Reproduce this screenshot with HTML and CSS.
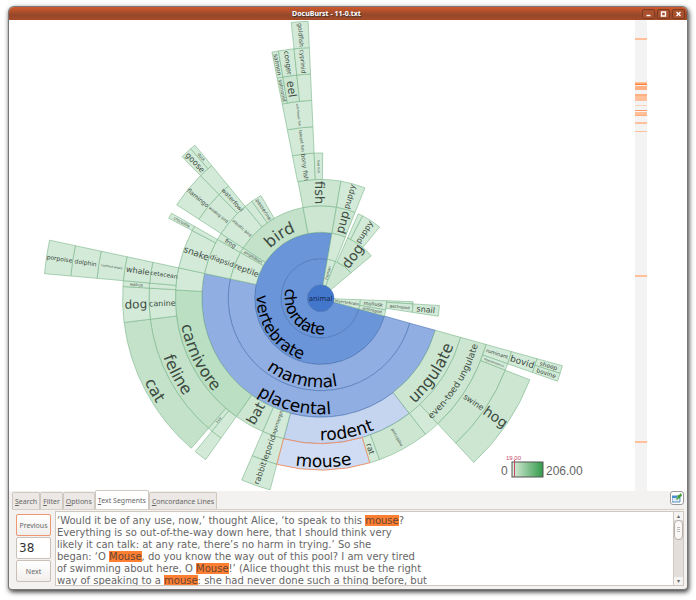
FILE: index.html
```html
<!DOCTYPE html>
<html lang="en">
<head>
    <meta charset="UTF-8">
    <meta name="viewport" content="width=device-width, initial-scale=1.0">
    <title>DocuBurst - 11-0.txt</title>
    <link rel="stylesheet" href="styles.css">
</head>
<body>
    <div class="window">
        <header class="titlebar">
            <h1 class="title">DocuBurst - 11-0.txt</h1>
            <div class="window-buttons">
                <button type="button" aria-label="Minimize"><svg viewBox="0 0 10 8"><path d="M3 5.5h4"/></svg></button>
                <button type="button" aria-label="Maximize"><svg viewBox="0 0 10 8"><path d="M3 2h4v4H3z"/></svg></button>
                <button type="button" aria-label="Close"><svg viewBox="0 0 10 8"><path d="M3 2l4 4M7 2L3 6"/></svg></button>
            </div>
        </header>

        <main>
            <svg class="chart" id="chart" viewBox="9 20 678 471" role="img" aria-label="Word tree for animal">
                <defs>
                    <linearGradient id="scale">
                        <stop offset="0" stop-color="#dceedd"/>
                        <stop offset="1" stop-color="#339a4a"/>
                    </linearGradient>
                </defs>
                <g id="cells"></g>
                <g id="labels"></g>
                <g id="overview"></g>
                <g class="legend">
                    <text x="501" y="475">0</text>
                    <rect x="512" y="462" width="31" height="15" fill="url(#scale)" stroke="#555"/>
                    <path d="M514.5 460v17"/>
                    <text x="546" y="475">206.00</text>
                    <text class="legend-value" x="506" y="460">19.00</text>
                </g>
            </svg>
        </main>

        <section class="panel">
            <nav class="tabs">
                <button type="button"><u>S</u>earch</button>
                <button type="button"><u>F</u>ilter</button>
                <button type="button"><u>O</u>ptions</button>
                <button type="button" class="active"><u>T</u>ext Segments</button>
                <button type="button"><u>C</u>oncordance Lines</button>
                <button type="button" class="detach" aria-label="Detach panel">
                    <svg viewBox="0 0 10 10">
                        <path d="M0 3h8v6H0z" fill="#dfeaf5" stroke="#5b8fc0"/>
                        <path d="M0 3h5v2H0z" fill="#4a8fd0"/>
                        <path d="M4 6l2-2-1-1 2-1 2-2 1 3-2 1v2L7 5 5 7z" fill="#3f9c35"/>
                    </svg>
                </button>
            </nav>
            <div class="segment">
                <div class="stepper">
                    <button type="button" class="focused">Previous</button>
                    <input type="text" value="38" aria-label="Segment number">
                    <button type="button">Next</button>
                </div>
                <div class="text-view">
                    <p class="text">‘Would it be of any use, now,’ thought Alice, ‘to speak to this <mark>mouse</mark>?<br>
                    Everything is so out-of-the-way down here, that I should think very<br>
                    likely it can talk: at any rate, there’s no harm in trying.’ So she<br>
                    began: ‘O <mark>Mouse</mark>, do you know the way out of this pool? I am very tired<br>
                    of swimming about here, O <mark>Mouse</mark>!’ (Alice thought this must be the right<br>
                    way of speaking to a <mark>mouse</mark>: she had never done such a thing before, but</p>
                    <div class="scrollbar">
                        <button type="button" aria-label="Scroll up">▴</button>
                        <div class="track"><div class="thumb"></div></div>
                        <button type="button" aria-label="Scroll down">▾</button>
                    </div>
                </div>
            </div>
        </section>
    </div>

    <script src="script.js"></script>
</body>
</html>
```

FILE: styles.css
```css
* {
    margin: 0;
    padding: 0;
    box-sizing: border-box;
}

body {
    background: white;
    padding: 7px 9px 10px;
    font-family: 'Noto Sans', 'Open Sans', sans-serif;
    font-size: 7px;
    color: #666;
}

button,
input {
    font: inherit;
    color: inherit;
}

.window {
    background: #f4f2f0;
    border-radius: 5px 5px 3px 3px;
    box-shadow: 0 0 0 1px #777, 1px 2px 5px 1px rgba(0, 0, 0, 0.8);
}

/* Title bar */
.titlebar {
    display: flex;
    align-items: center;
    height: 13px;
    padding: 0 2px;
    border-radius: 5px 5px 0 0;
    background: linear-gradient(#cf5a2b, #96482b 60%, #a44a28);
}

.title {
    flex: 1;
    font-size: 7px;
    line-height: 13px;
    text-align: center;
    color: white;
    text-shadow: 1px 1px 1px #333;
}

.window-buttons {
    display: flex;
    gap: 2px;
}

.window-buttons button {
    width: 13px;
    height: 10px;
    border: 1px solid #7d3c22;
    border-radius: 2px;
    background: #a9502e;
}

.window-buttons svg {
    display: block;
    width: 100%;
    height: 100%;
    fill: none;
    stroke: white;
    stroke-width: 1.4;
}

/* Sunburst */
.chart {
    display: block;
    width: 100%;
    background: white;
}

.cell {
    stroke: #78b688;
    stroke-width: 0.6;
}

.blue {
    stroke: #4a72b2;
}

.selected {
    stroke: #ee9670;
    stroke-width: 1;
}

.label {
    font-family: 'DejaVu Sans', sans-serif;
    fill: #3c4a40;
}

.label.strong {
    fill: #000;
}

.label.center {
    fill: #12274d;
}

.legend {
    font-family: 'Liberation Sans', Arial, sans-serif;
    font-size: 12px;
    fill: #666;
    stroke-width: 1;
}

.legend path {
    stroke: #c8486a;
}

.legend .legend-value {
    font-size: 6px;
    fill: #c8486a;
}

/* Bottom panel */
.panel {
    padding: 0 3px 3px;
}

.tabs {
    display: flex;
    align-items: flex-end;
    height: 19px;
    border-bottom: 1px solid #d8d0c8;
}

.tabs button {
    height: 17px;
    padding: 0 2px;
    border: 1px solid #cfc8c0;
    border-bottom: none;
    border-radius: 2px 2px 0 0;
    background: #ebe8e5;
    white-space: nowrap;
}

.tabs .active {
    height: 19px;
    background: white;
}

.tabs .detach {
    width: 14px;
    height: 14px;
    margin: 0 0 4px auto;
    padding: 1px;
    border: 1px solid #999;
    border-radius: 3px;
    background: white;
}

.detach svg {
    display: block;
    width: 100%;
}

.segment {
    display: flex;
    gap: 4px;
    padding: 1px 0 0 4px;
}

.stepper {
    display: flex;
    flex-direction: column;
    gap: 1px;
    width: 35px;
    padding-top: 3px;
}

.stepper button,
.stepper input {
    width: 100%;
    height: 22px;
    border: 1px solid #c9c1b9;
    border-radius: 2px;
    background: linear-gradient(white, #f1efed);
}

.stepper input {
    padding: 0 2px;
    font: 12px 'DejaVu Sans', sans-serif;
    color: #333;
    background: white;
}

.stepper .focused {
    border-color: #ee9670;
}

.text-view {
    display: flex;
    flex: 1;
    height: 75px;
    overflow: hidden;
    border: 1px solid #cfc8c0;
    background: white;
}

.text {
    flex: 1;
    padding: 3px 1px 0;
    font: 10px/12px 'DejaVu Sans', sans-serif;
    color: #666;
    white-space: nowrap;
}

mark {
    background: #ff7f32;
    color: #664433;
}

.scrollbar {
    display: flex;
    flex-direction: column;
    width: 10px;
    border-left: 1px solid #cfc8c0;
    background: #e3deda;
}

.scrollbar button {
    height: 8px;
    border: none;
    background: #f6f4f2;
    font-size: 6px;
    line-height: 8px;
}

.track {
    flex: 1;
}

.thumb {
    height: 20px;
    padding: 6px 2px;
    border: 1px solid #b8b0a8;
    border-radius: 4px;
    background: repeating-linear-gradient(#bbb 0 1px, #f8f7f6 1px 2px) content-box, #f8f7f6;
}
```

FILE: script.js
```javascript
const SVG = 'http://www.w3.org/2000/svg';
const CX = 320.7;
const CY = 298.3;
const CORE = 13.3;
const STEP = 26.4;

// ring, start angle, end angle, fill, label, font size
// angles are in degrees, clockwise from 3 o'clock
const LIGHT = '#d3ead9';
const SOFT = '#cce6d2';
const GREEN = '#c4e2ca';
const DEEP = '#bbdfc3';

const cells = [
    // vertebrates down to rodents
    [1, 15.6, 279.8, '#6b95d9'],
    [2, 15.6, 279.8, '#6b95d9'],
    [3, 15.6, 192.1, '#90aee1'],
    [4, 15.6, 192.1, '#90aee1'],
    [5, 52.4, 104.8, '#c5d4ef'],
    [5, 15.6, 52.4, SOFT],
    [5, 104.8, 113.5, LIGHT, 'lagomorph', 5],
    [5, 113.5, 125.5, SOFT, 'bat', 14],
    [5, 125.5, 183.3, DEEP],
    [5, 183.3, 192.1, LIGHT],
    // hoofed animals
    [6, 15.6, 47, SOFT],
    [6, 47, 52.4, LIGHT],
    [7, 15.6, 19.3, LIGHT, 'ruminant', 5],
    [7, 19.3, 21.3, LIGHT, 'hippopotamus', 3],
    [7, 21.3, 47, SOFT, 'swine', 8],
    [8, 15.6, 19.3, LIGHT, 'bovid', 9],
    [8, 21.3, 47, SOFT, 'hog', 14],
    [9, 15.6, 17.4, LIGHT, 'sheep', 6],
    [9, 17.4, 19.3, LIGHT, 'bovine', 6],
    // rodents and rabbits
    [6, 52.4, 70, SOFT, 'porcupine', 4],
    [6, 70, 73.4, LIGHT, 'rat', 8],
    [6, 104.8, 113.5, LIGHT, 'leporid', 8],
    [7, 104.8, 113.5, LIGHT, 'rabbit', 8],
    // carnivores
    [6, 125.5, 129.3, LIGHT],
    [6, 129.3, 130.8, LIGHT, 'bear', 3],
    [7, 125.5, 129.3, LIGHT],
    [6, 130.8, 173, GREEN],
    [7, 130.8, 173, GREEN],
    [6, 173, 183.4, LIGHT, 'canine', 8],
    [7, 173, 183.4, LIGHT, 'dog', 12],
    [6, 183.4, 185.1, LIGHT],
    [7, 183.4, 185.1, LIGHT, 'walrus', 4],
    // whales
    [6, 185.1, 192.1, LIGHT, 'cetacean', 6],
    [7, 185.1, 192.1, LIGHT, 'whale', 8],
    [8, 185.1, 192.1, LIGHT, 'toothed whale', 3],
    [9, 185.1, 192.1, LIGHT, 'dolphin', 6],
    [10, 185.1, 192.1, LIGHT, 'porpoise', 6],
    // reptiles and amphibians
    [3, 192.1, 209.7, LIGHT, 'reptile', 8],
    [4, 192.1, 209.7, LIGHT, 'diapsid', 7],
    [5, 192.1, 207.8, LIGHT, 'snake', 9],
    [5, 207.8, 209.7, LIGHT],
    [6, 207.8, 209.7, LIGHT, 'crocodile', 4],
    [3, 209.7, 213, LIGHT, 'amphibian', 4],
    [4, 209.7, 213, LIGHT, 'frog', 6],
    // birds
    [3, 213, 259, GREEN],
    [4, 213, 230.6, LIGHT, 'aquatic bird', 4],
    [4, 230.6, 234.7, LIGHT],
    [4, 234.7, 239.8, LIGHT, 'passerine', 5],
    [5, 213, 225.6, LIGHT, 'wading bird', 4],
    [5, 225.6, 230.6, LIGHT, 'waterfowl', 6],
    [6, 213, 225.6, LIGHT, 'flamingo', 6],
    [6, 225.6, 230.6, LIGHT],
    [7, 225.6, 229, LIGHT, 'goose', 8],
    [7, 229, 230.6, LIGHT, 'duck', 4],
    // fish
    [3, 259, 279.8, SOFT],
    [4, 259, 279.8, SOFT, 'fish', 13],
    [5, 258.8, 267.4, LIGHT, 'bony fish', 6],
    [5, 267.4, 270.8, LIGHT, 'food fish', 3],
    [6, 258.8, 267.4, LIGHT, 'teleost fish', 4],
    [7, 258.8, 267.4, LIGHT, 'soft-finned fish', 3],
    [8, 258.8, 260.3, LIGHT, 'salmonid', 5],
    [8, 260.3, 263.9, SOFT, 'eel', 11],
    [8, 263.9, 267.4, LIGHT],
    [9, 258.8, 260.3, LIGHT, 'salmon', 6],
    [9, 260.3, 263.9, LIGHT, 'conger', 7],
    [9, 263.9, 267.4, LIGHT, 'cyprinid', 6],
    [10, 263.9, 267.4, LIGHT, 'goldfish', 6],
    // young and domestic animals
    [1, 279.8, 292, LIGHT, 'human', 4],
    [2, 279.8, 292, LIGHT],
    [3, 279.8, 291.8, SOFT, 'pup', 12],
    [4, 279.8, 291.8, LIGHT, 'puppy', 8],
    [1, 292, 320, SOFT],
    [2, 294, 320, SOFT, 'dog', 14],
    [3, 294, 297, LIGHT],
    [3, 297, 309.6, LIGHT, 'puppy', 8],
    // invertebrates
    [1, 2.1, 15.6, LIGHT, 'invertebrate', 4],
    [2, 2.1, 10.2, LIGHT, 'mollusk', 5],
    [2, 10.2, 15.6, LIGHT, 'arthropod', 4],
    [3, 2.1, 3.5, LIGHT],
    [3, 3.5, 8.7, LIGHT, 'gastropod', 4],
    [4, 3.5, 8.7, LIGHT, 'snail', 8],
    // selected word goes last so its outline stays on top
    [6, 73.4, 104.8, '#cfdcf3']
];

// label, baseline radius, middle angle, font size, strong
const arcs = [
    ['chordate', 36, 140, 16, true],
    ['vertebrate', 64, 145, 16, true],
    ['mammal', 89, 103, 17, true],
    ['placental', 116, 104, 17, true],
    ['rodent', 142, 79, 17, true],
    ['mouse', 169, 89, 17, true],
    ['ungulate', 141, 34, 16, false],
    ['even-toed ungulate', 164, 32, 9, false],
    ['carnivore', 142, 154, 16, false],
    ['feline', 168, 152, 16, false],
    ['cat', 195, 151, 16, false],
    ['bird', 71, 237, 16, false]
];

// y position and colour of each hit in the overview strip
const hits = [
    [38, 2, '#ffc09a'], [82, 1, '#ffc09a'], [83, 1, '#ffaa78'], [84, 1, '#ff7f32'],
    [86, 4, '#ffb083'], [94, 2, '#ffb083'], [96, 5, '#ffc09a'], [105, 1, '#ffd3b8'],
    [110, 1, '#ff9a60'], [112, 3, '#ffc09a'], [115, 1, '#ffaa78'], [122, 2, '#ffc09a'],
    [131, 1, '#ffc09a'], [275, 2, '#ffc09a'], [441, 2, '#ffc09a']
];

function add(parent, name, attrs, text) {
    const el = document.createElementNS(SVG, name);
    for (const key in attrs) el.setAttribute(key, attrs[key]);
    if (text) el.textContent = text;
    document.getElementById(parent).appendChild(el);
    return el;
}

function point(r, angle) {
    const a = angle * Math.PI / 180;
    return (CX + r * Math.cos(a)).toFixed(2) + ' ' + (CY + r * Math.sin(a)).toFixed(2);
}

function sector(ring, from, to) {
    const inner = CORE + STEP * (ring - 1);
    const outer = inner + STEP;
    const large = to - from > 180 ? 1 : 0;
    return `M${point(inner, from)}L${point(outer, from)}` +
        `A${outer} ${outer} 0 ${large} 1 ${point(outer, to)}` +
        `L${point(inner, to)}A${inner} ${inner} 0 ${large} 0 ${point(inner, from)}Z`;
}

cells.forEach(([ring, from, to, fill, label, size], i) => {
    let type = 'cell';
    if (i < 5) type += ' blue';
    if (i === cells.length - 1) type += ' selected';
    add('cells', 'path', { class: type, d: sector(ring, from, to), fill });

    if (!label) return;
    const mid = (from + to) / 2;
    // keep radial labels readable on the left half
    const turn = Math.cos(mid * Math.PI / 180) < 0 ? mid - 180 : mid;
    const [x, y] = point(CORE + STEP * (ring - 0.5), mid).split(' ');
    add('labels', 'text', {
        class: 'label',
        'font-size': size,
        'text-anchor': 'middle',
        dy: '0.35em',
        transform: `translate(${x} ${y}) rotate(${turn})`
    }, label);
});

arcs.forEach(([label, r, mid, size, strong], i) => {
    const top = mid > 180;
    const from = top ? mid - 80 : mid + 80;
    const to = top ? mid + 80 : mid - 80;
    add('labels', 'path', {
        id: 'arc' + i,
        fill: 'none',
        d: `M${point(r, from)}A${r} ${r} 0 0 ${top ? 1 : 0} ${point(r, to)}`
    });
    const text = add('labels', 'text', {
        class: strong ? 'label strong' : 'label',
        'font-size': size,
        'text-anchor': 'middle'
    });
    const path = document.createElementNS(SVG, 'textPath');
    path.setAttribute('href', '#arc' + i);
    path.setAttribute('startOffset', '50%');
    path.textContent = label;
    text.appendChild(path);
});

add('cells', 'circle', { class: 'cell blue', cx: CX, cy: CY, r: CORE, fill: '#4377cc' });
add('labels', 'text', {
    class: 'label center', x: CX, y: CY, dy: '0.35em', 'font-size': 7, 'text-anchor': 'middle'
}, 'animal');

add('overview', 'rect', { x: 635, y: 20, width: 12, height: 471, fill: '#f3f3f3' });
hits.forEach(([y, height, fill]) => {
    add('overview', 'rect', { x: 635, y, width: 12, height, fill });
});
```
